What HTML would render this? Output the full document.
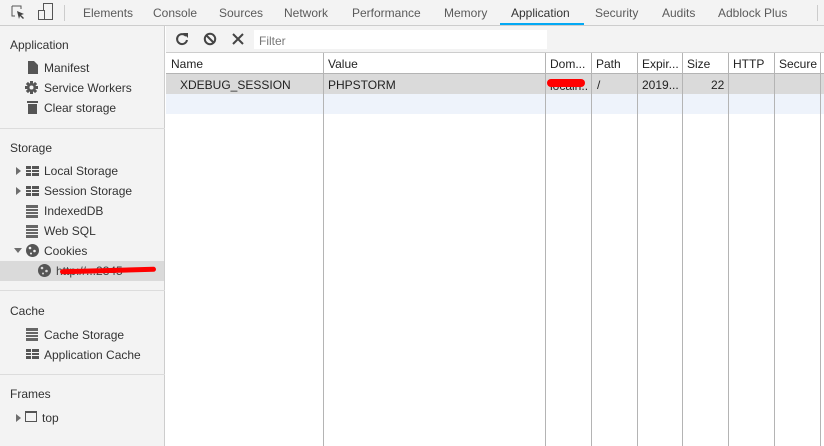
<!DOCTYPE html>
<html><head><style>
*{margin:0;padding:0;box-sizing:border-box}
body{width:824px;height:446px;overflow:hidden;background:#fff;font-family:"Liberation Sans",sans-serif;font-size:12px;color:#303030;position:relative}
.a{position:absolute;white-space:nowrap}
.tab{position:absolute;top:6px;color:#5a5a5a}
.sb{position:absolute;left:0;top:26px;width:165px;height:420px;background:#f3f3f3;border-right:1px solid #cdcdcd}
.hd{position:absolute;left:10px;color:#333}
.it{position:absolute;left:44px;color:#333}
.div{position:absolute;left:0;width:165px;height:1px;background:#dcdcdc}
.ic{position:absolute;left:26px}
.tri{position:absolute;left:16px;width:0;height:0;border-top:4px solid transparent;border-bottom:4px solid transparent;border-left:5px solid #6e6e6e}
.col{position:absolute;top:53px;bottom:0;width:1px;background:#b4b4b4}
.th{position:absolute;top:57px;color:#222}
</style></head><body>
<div class="a" style="left:0;top:0;width:824px;height:26px;background:#f3f3f3;border-bottom:1px solid #cdcdcd"></div>
<svg class="a" style="left:11px;top:5px" width="16" height="16"><path d="M1 1h9v3M1 1v10h3" fill="none" stroke="#555" stroke-width="1"/><path d="M6 6l7 3-3 1 3 3-1 1-3-3-1 3z" fill="#444"/></svg>
<svg class="a" style="left:37px;top:3px" width="18" height="18"><rect x="6.5" y="0.5" width="9" height="16" fill="none" stroke="#555"/><rect x="1.5" y="7.5" width="6" height="9" fill="#f3f3f3" stroke="#555"/></svg>
<div class="a" style="left:64px;top:5px;width:1px;height:16px;background:#ccc"></div>
<span class="tab" style="left:83px">Elements</span>
<span class="tab" style="left:153px">Console</span>
<span class="tab" style="left:219px">Sources</span>
<span class="tab" style="left:284px">Network</span>
<span class="tab" style="left:352px">Performance</span>
<span class="tab" style="left:444px">Memory</span>
<span class="tab" style="left:511px;color:#333">Application</span>
<span class="tab" style="left:595px">Security</span>
<span class="tab" style="left:662px">Audits</span>
<span class="tab" style="left:718px">Adblock Plus</span>
<div class="a" style="left:500px;top:23px;width:84px;height:2px;background:#03a9f4"></div>
<div class="a" style="left:817px;top:5px;width:1px;height:16px;background:#ccc"></div>

<div class="sb">
<span class="hd" style="top:12px">Application</span>
<svg class="ic" style="top:35px;left:28px" width="10" height="13"><path d="M0 0h6l4 4v9H0z" fill="#555"/></svg>
<span class="it" style="top:35px">Manifest</span>
<svg class="ic" style="top:55px;left:25px" width="13" height="13"><g fill="#555"><circle cx="6.5" cy="6.5" r="4.5"/><rect x="5" y="0" width="3" height="13"/><rect x="0" y="5" width="13" height="3"/><rect x="5" y="0" width="3" height="13" transform="rotate(45 6.5 6.5)"/><rect x="5" y="0" width="3" height="13" transform="rotate(-45 6.5 6.5)"/></g><circle cx="6.5" cy="6.5" r="2" fill="#f3f3f3"/></svg>
<span class="it" style="top:55px">Service Workers</span>
<svg class="ic" style="top:74px;left:27px" width="11" height="14"><rect x="0" y="1" width="11" height="2" fill="#555"/><rect x="1" y="4" width="9" height="10" fill="#555"/></svg>
<span class="it" style="top:75px">Clear storage</span>
<div class="div" style="top:102px"></div>
<span class="hd" style="top:115px">Storage</span>
<div class="tri" style="top:141px"></div>
<svg class="ic" style="top:140px" width="13" height="10"><path d="M0 0h13v10H0z" fill="#555"/><path d="M0 3.5h13M0 6.5h13M5.5 0v10" stroke="#f3f3f3"/></svg>
<span class="it" style="top:138px">Local Storage</span>
<div class="tri" style="top:161px"></div>
<svg class="ic" style="top:160px" width="13" height="10"><path d="M0 0h13v10H0z" fill="#555"/><path d="M0 3.5h13M0 6.5h13M5.5 0v10" stroke="#f3f3f3"/></svg>
<span class="it" style="top:158px">Session Storage</span>
<svg class="ic" style="top:179px" width="12" height="13"><path d="M0 0h12v13H0z" fill="#666"/><path d="M0 3.5h12M0 6.5h12M0 9.5h12" stroke="#f3f3f3"/></svg>
<span class="it" style="top:178px">IndexedDB</span>
<svg class="ic" style="top:199px" width="12" height="13"><path d="M0 0h12v13H0z" fill="#666"/><path d="M0 3.5h12M0 6.5h12M0 9.5h12" stroke="#f3f3f3"/></svg>
<span class="it" style="top:198px">Web SQL</span>
<div class="a" style="left:14px;top:222px;border-left:4px solid transparent;border-right:4px solid transparent;border-top:5px solid #6e6e6e"></div>
<svg class="ic" style="top:218px" width="13" height="13"><circle cx="6.5" cy="6.5" r="6.5" fill="#555"/><circle cx="4" cy="4" r="1.3" fill="#f3f3f3"/><circle cx="8.5" cy="7" r="1.3" fill="#f3f3f3"/><circle cx="5" cy="9.5" r="1" fill="#f3f3f3"/></svg>
<span class="it" style="top:218px">Cookies</span>
<div class="a" style="left:0;top:235px;width:164px;height:20px;background:#dadada"></div>
<svg class="ic" style="top:238px;left:38px" width="13" height="13"><circle cx="6.5" cy="6.5" r="6.5" fill="#555"/><circle cx="4" cy="4" r="1.3" fill="#dadada"/><circle cx="8.5" cy="7" r="1.3" fill="#dadada"/><circle cx="5" cy="9.5" r="1" fill="#dadada"/></svg>
<span class="it" style="top:238px;left:56px;color:#444">http://...2345</span>
<div class="a" style="left:60px;top:242px;width:96px;height:5px;background:#f00;border-radius:3px;transform:rotate(-1.5deg)"></div>
<div class="div" style="top:264px"></div>
<span class="hd" style="top:278px">Cache</span>
<svg class="ic" style="top:302px" width="12" height="13"><path d="M0 0h12v13H0z" fill="#666"/><path d="M0 3.5h12M0 6.5h12M0 9.5h12" stroke="#f3f3f3"/></svg>
<span class="it" style="top:302px">Cache Storage</span>
<svg class="ic" style="top:323px" width="13" height="10"><path d="M0 0h13v10H0z" fill="#555"/><path d="M0 3.5h13M0 6.5h13M5.5 0v10" stroke="#f3f3f3"/></svg>
<span class="it" style="top:322px">Application Cache</span>
<div class="div" style="top:348px"></div>
<span class="hd" style="top:361px">Frames</span>
<div class="tri" style="top:388px"></div>
<div class="a" style="left:25px;top:385px;width:12px;height:11px;border:1.5px solid #555;border-top-width:2.5px"></div>
<span class="it" style="top:385px;left:42px">top</span>
</div>

<div class="a" style="left:166px;top:26px;width:658px;height:27px;background:#f3f3f3;border-bottom:1px solid #cdcdcd"></div>
<svg class="a" style="left:175px;top:32px" width="14" height="14"><path d="M11 4A5 5 0 1 0 12 8" fill="none" stroke="#444" stroke-width="2"/><path d="M8 1h5v5z" fill="#444"/></svg>
<svg class="a" style="left:203px;top:32px" width="14" height="14"><circle cx="7" cy="7" r="5.2" fill="none" stroke="#444" stroke-width="2"/><path d="M3.5 3.5l7 7" stroke="#444" stroke-width="2"/></svg>
<svg class="a" style="left:232px;top:33px" width="12" height="12"><path d="M1 1l10 10M11 1L1 11" stroke="#444" stroke-width="2"/></svg>
<div class="a" style="left:254px;top:30px;width:293px;height:19px;background:#fff"></div>
<span class="a" style="left:259px;top:34px;color:#777">Filter</span>

<div class="a" style="left:166px;top:73px;width:658px;height:1px;background:#b4b4b4"></div>
<div class="a" style="left:166px;top:74px;width:658px;height:20px;background:#dadada"></div>
<div class="a" style="left:166px;top:94px;width:658px;height:20px;background:#eef3fb"></div>
<div class="col" style="left:323px"></div>
<div class="col" style="left:545px"></div>
<div class="col" style="left:591px"></div>
<div class="col" style="left:637px"></div>
<div class="col" style="left:682px"></div>
<div class="col" style="left:728px"></div>
<div class="col" style="left:774px"></div>
<div class="col" style="left:820px"></div>
<span class="th" style="left:171px">Name</span>
<span class="th" style="left:328px">Value</span>
<span class="th" style="left:550px">Dom...</span>
<span class="th" style="left:596px">Path</span>
<span class="th" style="left:642px">Expir...</span>
<span class="th" style="left:687px">Size</span>
<span class="th" style="left:733px">HTTP</span>
<span class="th" style="left:779px">Secure</span>
<span class="a" style="left:180px;top:78px;color:#222">XDEBUG_SESSION</span>
<span class="a" style="left:328px;top:78px;color:#222">PHPSTORM</span>
<span class="a" style="left:550px;top:79px;color:#222">localh..</span>
<div class="a" style="left:547px;top:79px;width:38px;height:8px;background:#f00;border-radius:4px"></div>
<span class="a" style="left:597px;top:78px;color:#222">/</span>
<span class="a" style="left:642px;top:78px;color:#222">2019...</span>
<span class="a" style="left:711px;top:78px;color:#222">22</span>
</body></html>
